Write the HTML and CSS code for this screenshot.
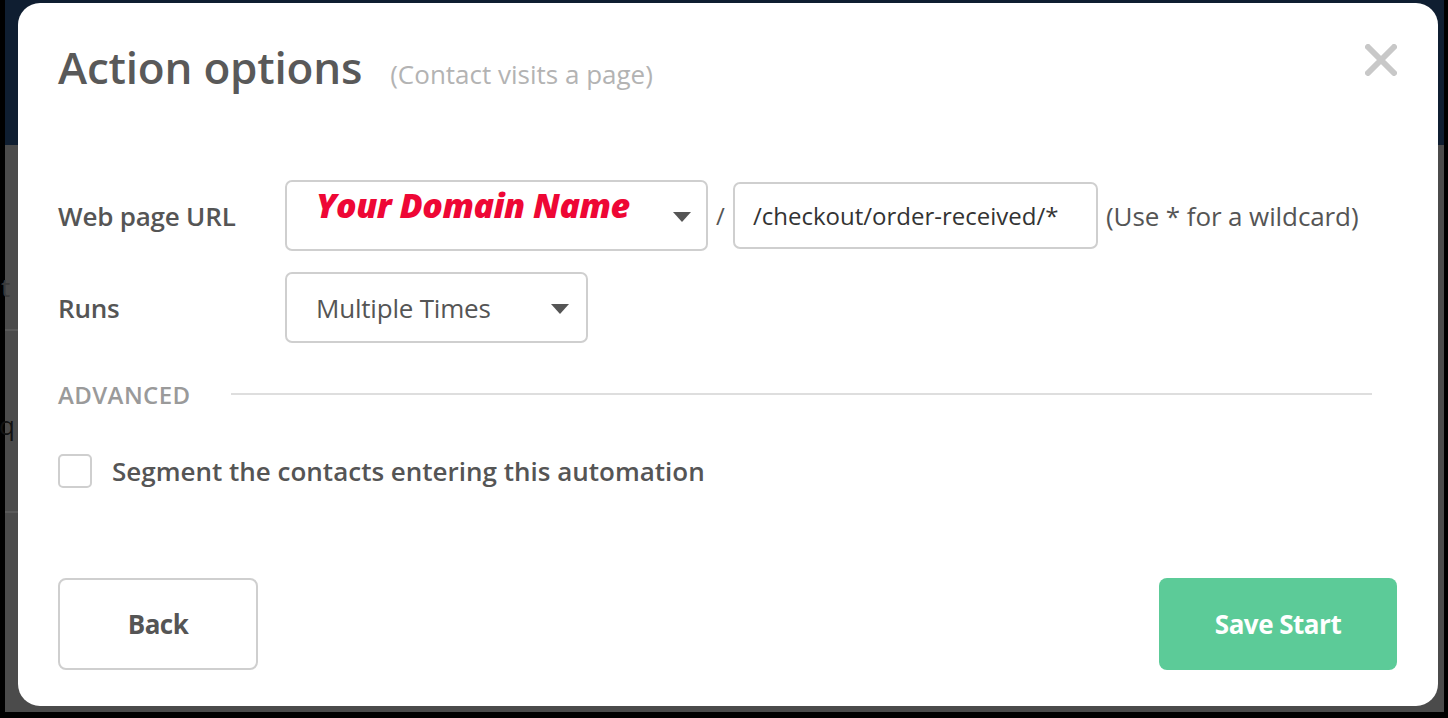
FILE: index.html
```html
<!DOCTYPE html>
<html>
<head>
<meta charset="utf-8">
<link rel="stylesheet" href="styles.css">
</head>
<body>
<div class="page">
  <div class="page-header"></div>
  <div class="page-body">
    <span class="frag frag-t">t</span>
    <div class="frag-line line-a"></div>
    <span class="frag frag-q">q</span>
    <div class="frag-line line-b"></div>
  </div>
</div>
<div class="modal">
  <div class="modal-head">
    <h1 class="title">Action options</h1>
    <span class="subtitle">(Contact visits a page)</span>
    <button class="close" aria-label="Close">
      <svg width="32" height="32" viewBox="0 0 32 32"><path d="M3 3 L29 29 M29 3 L3 29" stroke="#c8c8c8" stroke-width="6" stroke-linecap="round" fill="none"/></svg>
    </button>
  </div>
  <div class="form">
    <div class="row">
      <label class="label">Web page URL</label>
      <div class="select domain">
        <span class="domain-text">Your Domain Name</span>
        <span class="caret"></span>
      </div>
      <span class="slash">/</span>
      <div class="input">/checkout/order-received/*</div>
      <span class="hint">(Use * for a wildcard)</span>
    </div>
    <div class="row row-runs">
      <label class="label">Runs</label>
      <div class="select runs">
        <span class="select-text">Multiple Times</span>
        <span class="caret"></span>
      </div>
    </div>
    <div class="advanced">
      <span class="adv-label">ADVANCED</span>
      <div class="adv-line"></div>
    </div>
    <div class="check-row">
      <span class="checkbox"></span>
      <span class="check-label">Segment the contacts entering this automation</span>
    </div>
  </div>
  <div class="footer">
    <button class="btn btn-back">Back</button>
    <button class="btn btn-save">Save Start</button>
  </div>
</div>
</body>
</html>
```
FILE: styles.css
```css
* { box-sizing: border-box; }
html, body { margin: 0; padding: 0; }
body {
  width: 1448px;
  height: 718px;
  background: #000;
  overflow: hidden;
  font-family: "Open Sans", "Liberation Sans", sans-serif;
  position: relative;
}
.page {
  margin-left: 5px;
  width: 1439px;
  height: 712px;
  display: flex;
  flex-direction: column;
}
.page-header {
  height: 145px;
  background: #0f1e31;
}
.page-body {
  flex: 1;
  background: #4b4b4b;
  position: relative;
}
.frag {
  position: absolute;
  color: #222;
  font-size: 26px;
}
.frag-t { left: -4px; top: 124px; color: #3a3a3a; }
.frag-q { left: -6px; top: 262px; color: #111; }
.frag-line {
  position: absolute;
  left: 0;
  width: 14px;
  height: 2px;
  background: #5a5a5a;
}
.line-a { top: 184px; }
.line-b { top: 366px; }

.modal {
  position: absolute;
  left: 18px;
  top: 3px;
  width: 1420px;
  height: 703px;
  background: #fff;
  border-radius: 22px;
  padding: 0 41px 36px 40px;
  display: flex;
  flex-direction: column;
}
.modal-head {
  display: flex;
  align-items: baseline;
  height: 118px;
  padding-top: 34px;
  position: relative;
}
.title {
  margin: 0;
  font-size: 44px;
  font-weight: 600;
  color: #595959;
  letter-spacing: -0.2px;
  line-height: 60px;
}
.subtitle {
  margin-left: 28px;
  font-size: 26px;
  color: #b3b3b3;
  letter-spacing: 0;
}
.close {
  position: absolute;
  right: 0;
  top: 41px;
  width: 32px;
  height: 32px;
  padding: 0;
  border: 0;
  background: none;
}
.close svg { display: block; }

.form { display: flex; flex-direction: column; }
.row {
  display: flex;
  align-items: center;
  height: 71px;
  margin-top: 59px;
}
.row-runs { margin-top: 21px; }
.label {
  width: 227px;
  font-size: 26px;
  font-weight: 600;
  color: #555;
  letter-spacing: -0.2px;
}
.select {
  height: 71px;
  border: 2px solid #cfcfcf;
  border-radius: 7px;
  display: flex;
  align-items: center;
  position: relative;
}
.domain {
  width: 423px;
  padding-left: 29px;
  align-items: flex-start;
}
.domain-text {
  margin-top: 2px;
  font-family: "Open Sans", "Liberation Sans", sans-serif;
  font-weight: 800;
  font-style: italic;
  font-size: 34px;
  color: #ee0735;
  letter-spacing: -0.5px;
  line-height: 42px;
}
.runs {
  width: 303px;
  padding-left: 29px;
}
.select-text {
  font-size: 26px;
  color: #555;
  letter-spacing: -0.2px;
}
.caret {
  position: absolute;
  top: 30px;
  width: 0;
  height: 0;
  border-left: 9.5px solid transparent;
  border-right: 9.5px solid transparent;
  border-top: 10px solid #555;
}
.domain .caret { right: 15px; }
.runs .caret { right: 17px; }
.slash {
  width: 25px;
  text-align: center;
  font-size: 24px;
  color: #555;
}
.input {
  width: 365px;
  height: 67px;
  border: 2px solid #cfcfcf;
  border-radius: 7px;
  padding-left: 18px;
  display: flex;
  align-items: center;
  font-size: 24px;
  color: #333;
  white-space: nowrap;
}
.hint {
  margin-left: 8px;
  font-size: 26px;
  color: #555;
  letter-spacing: -0.1px;
}
.advanced {
  display: flex;
  align-items: center;
  margin-top: 35px;
  height: 32px;
}
.adv-label {
  font-size: 24px;
  font-weight: 600;
  color: #9a9a9a;
  width: 173px;
  letter-spacing: 0.4px;
}
.adv-line {
  width: 1141px;
  height: 2px;
  background: #dedede;
}
.check-row {
  display: flex;
  align-items: center;
  margin-top: 43px;
}
.checkbox {
  width: 34px;
  height: 34px;
  border: 2px solid #cfcfcf;
  border-radius: 5px;
  margin-right: 20px;
}
.check-label {
  font-size: 26px;
  font-weight: 600;
  color: #555;
  letter-spacing: 0;
}
.footer {
  margin-top: auto;
  display: flex;
  justify-content: space-between;
  align-items: flex-end;
}
.btn {
  font-family: "Open Sans", "Liberation Sans", sans-serif;
  font-weight: 700;
  font-size: 26px;
  border-radius: 8px;
  letter-spacing: -0.5px;
}
.btn-back {
  width: 200px;
  height: 92px;
  background: #fff;
  border: 2px solid #cfcfcf;
  color: #555;
}
.btn-save {
  width: 238px;
  height: 92px;
  background: #5ccb98;
  border: 0;
  color: #fff;
}
```
